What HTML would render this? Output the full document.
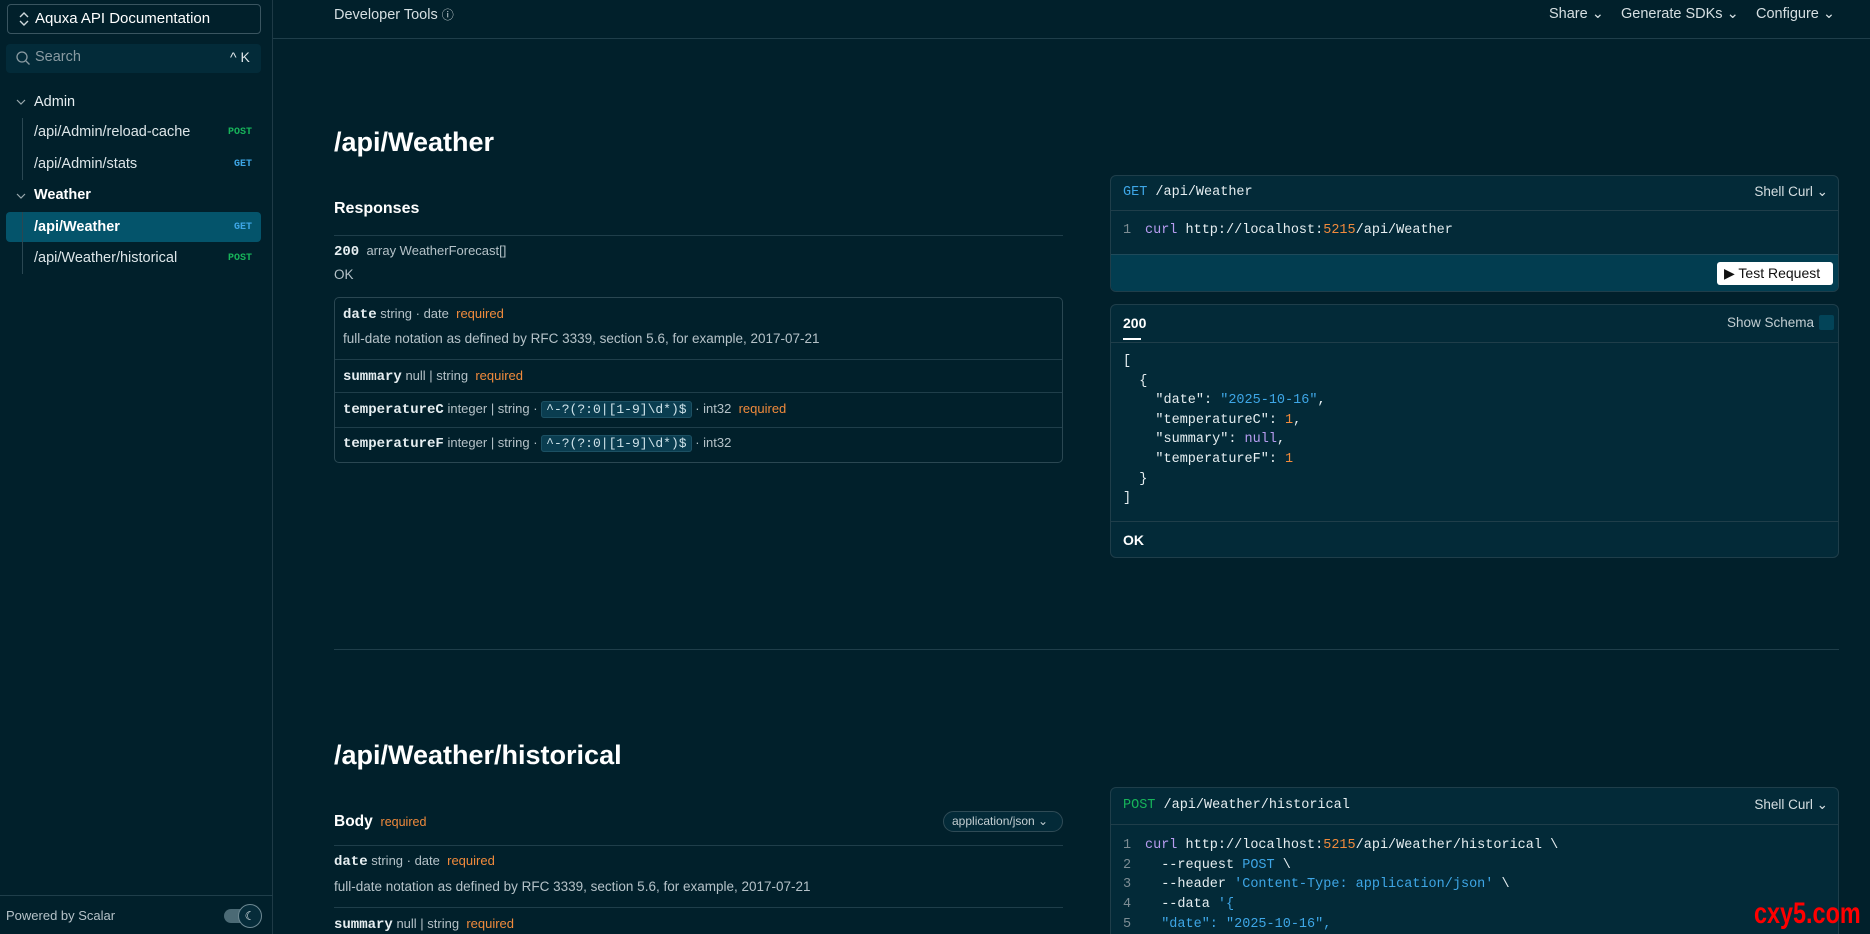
<!DOCTYPE html>
<html style="background:#01202b"><head><meta charset="utf-8"><style>
*{box-sizing:border-box;margin:0;padding:0}
html,body{width:1870px;height:934px;overflow:hidden}
body{background:#01202b;font-family:"Liberation Sans",sans-serif;color:#e6eef1;position:relative}
.a{position:absolute;white-space:nowrap}
.mono{font-family:"Liberation Mono",monospace}
.side{position:absolute;left:0;top:0;width:273px;height:934px;border-right:1px solid #1e3a46}
.g{color:#17b45a;font-size:10px;font-weight:bold;font-family:"Liberation Mono",monospace}
.b{color:#3ea6e6;font-size:10px;font-weight:bold;font-family:"Liberation Mono",monospace}
.muted{color:#b5c2c8}
.req{color:#f08a3c}
.chip{background:#0a3d50;border:1px solid #1c5063;border-radius:3px;padding:0 4px;font-family:"Liberation Mono",monospace;font-size:13px;color:#cfe3ea}
.panel{position:absolute;left:1110px;width:729px;background:#032a38;border:1px solid #1f3e4a;border-radius:6px;overflow:hidden}
.hl{position:absolute;height:1px;background:#1f3e4a}
.code{font-family:"Liberation Mono",monospace;font-size:13.5px}
.ln{color:#7d8d94;display:inline-block;width:22px}
</style></head><body>
<div class="side">
 <div class="a" style="left:7px;top:4px;width:254px;height:30px;border:1px solid #3a5560;border-radius:4px"></div>
 <svg class="a" style="left:18px;top:11px" width="12" height="16" viewBox="0 0 12 16"><path d="M2 6l4-4 4 4M2 10l4 4 4-4" fill="none" stroke="#cfd8dc" stroke-width="1.4"/></svg>
 <div class="a" style="left:35px;top:10px;font-size:15px;color:#fff">Aquxa API Documentation</div>
 <div class="a" style="left:6px;top:44px;width:255px;height:29px;background:#032b39;border-radius:4px"></div>
 <svg class="a" style="left:15px;top:50px" width="16" height="16" viewBox="0 0 16 16"><circle cx="7" cy="7" r="5" fill="none" stroke="#8a9ba2" stroke-width="1.3"/><path d="M11 11l3.5 3.5" stroke="#8a9ba2" stroke-width="1.3"/></svg>
 <div class="a" style="left:35px;top:49px;font-size:14.5px;color:#8a9ba2">Search</div>
 <div class="a" style="left:230px;top:49px;font-size:14px;color:#dfe6e9">^ K</div>
 <svg class="a" style="left:16px;top:98px" width="10" height="8" viewBox="0 0 10 8"><path d="M1 2l4 4 4-4" fill="none" stroke="#9aa9ae" stroke-width="1.2"/></svg>
 <div class="a" style="left:34px;top:94px;font-size:14.5px;color:#e6eef1">Admin</div>
 <div class="a" style="left:22px;top:118px;width:1px;height:62px;background:#2a4752"></div>
 <div class="a" style="left:34px;top:124px;font-size:14.5px;color:#dde6e9">/api/Admin/reload-cache</div>
 <div class="a g" style="left:228px;top:127px">POST</div>
 <div class="a" style="left:34px;top:156px;font-size:14.5px;color:#dde6e9">/api/Admin/stats</div>
 <div class="a b" style="left:234px;top:159px">GET</div>
 <svg class="a" style="left:16px;top:192px" width="10" height="8" viewBox="0 0 10 8"><path d="M1 2l4 4 4-4" fill="none" stroke="#9aa9ae" stroke-width="1.2"/></svg>
 <div class="a" style="left:34px;top:187px;font-size:14.5px;font-weight:bold;color:#fff">Weather</div>
 <div class="a" style="left:6px;top:212px;width:255px;height:30px;background:#04546b;border-radius:4px"></div>
 <div class="a" style="left:22px;top:212px;width:1px;height:62px;background:#2a4752"></div>
 <div class="a" style="left:34px;top:219px;font-size:14.5px;font-weight:bold;color:#fff">/api/Weather</div>
 <div class="a b" style="left:234px;top:222px">GET</div>
 <div class="a" style="left:34px;top:250px;font-size:14.5px;color:#dde6e9">/api/Weather/historical</div>
 <div class="a g" style="left:228px;top:253px">POST</div>
 <div class="a" style="left:0;top:895px;width:273px;height:1px;background:#1f3e4a"></div>
 <div class="a" style="left:6px;top:908px;font-size:13px;color:#b5c2c8">Powered by Scalar</div>
 <div class="a" style="left:224px;top:909px;width:30px;height:14px;background:#4b6a75;border-radius:7px"></div>
 <div class="a" style="left:238px;top:904px;width:24px;height:24px;background:#062c3a;border:1px solid #6f8a94;border-radius:12px;font-size:12px;text-align:center;line-height:22px;color:#dfe6e9">☾</div>
</div>
<div class="a" style="left:273px;top:38px;width:1597px;height:1px;background:#1f3e4a"></div>
<div class="a" style="left:334px;top:6px;font-size:14.5px;color:#d6dfe2">Developer Tools <span style="font-size:12px">ⓘ</span></div>
<div class="a" style="left:1549px;top:6px;font-size:14.5px;color:#d6dfe2">Share ⌄</div>
<div class="a" style="left:1621px;top:6px;font-size:14.5px;color:#d6dfe2">Generate SDKs ⌄</div>
<div class="a" style="left:1756px;top:6px;font-size:14.5px;color:#d6dfe2">Configure ⌄</div>

<div class="a" style="left:334px;top:127px;font-size:27px;font-weight:bold;color:#fff">/api/Weather</div>
<div class="a" style="left:334px;top:200px;font-size:16px;font-weight:bold;color:#fff">Responses</div>
<div class="hl" style="left:334px;top:235px;width:729px"></div>
<div class="a" style="left:334px;top:243px;font-size:13px"><b class="mono" style="font-size:14px">200</b> <span class="muted">&nbsp;array WeatherForecast[]</span></div>
<div class="a muted" style="left:334px;top:267px;font-size:13.5px">OK</div>
<div class="a" style="left:334px;top:297px;width:729px;height:166px;border:1px solid #2a4752;border-radius:5px"></div>
<div class="hl" style="left:335px;top:359px;width:727px"></div>
<div class="hl" style="left:335px;top:392px;width:727px"></div>
<div class="hl" style="left:335px;top:427px;width:727px"></div>
<div class="a" style="left:343px;top:306px;font-size:13px"><b class="mono" style="font-size:14px">date</b> <span class="muted">string · date</span> &nbsp;<span class="req">required</span></div>
<div class="a muted" style="left:343px;top:331px;font-size:13.5px">full-date notation as defined by RFC 3339, section 5.6, for example, 2017-07-21</div>
<div class="a" style="left:343px;top:368px;font-size:13px"><b class="mono" style="font-size:14px">summary</b> <span class="muted">null | string</span> &nbsp;<span class="req">required</span></div>
<div class="a" style="left:343px;top:401px;font-size:13px"><b class="mono" style="font-size:14px">temperatureC</b> <span class="muted">integer | string · </span><span class="chip">^-?(?:0|[1-9]\d*)$</span> <span class="muted">· int32</span> &nbsp;<span class="req">required</span></div>
<div class="a" style="left:343px;top:435px;font-size:13px"><b class="mono" style="font-size:14px">temperatureF</b> <span class="muted">integer | string · </span><span class="chip">^-?(?:0|[1-9]\d*)$</span> <span class="muted">· int32</span></div>

<div class="panel" style="top:175px;height:117px">
 <div class="a code" style="left:12px;top:9px"><span style="color:#3ea6e6">GET</span> /api/Weather</div>
 <div class="a" style="right:10px;top:8px;font-size:13.5px;color:#d6dfe2">Shell Curl ⌄</div>
 <div class="hl" style="left:0;top:34px;width:729px"></div>
 <div class="a code" style="left:12px;top:47px"><span class="ln">1</span><span style="color:#b79cf0">curl</span> http://localhost:<span style="color:#f08a3c">5215</span>/api/Weather</div>
 <div class="a" style="left:0;top:78px;width:729px;height:39px;background:#023d50;border-top:1px solid #1f4a5a"></div>
 <div class="a" style="left:606px;top:86px;width:116px;height:23px;background:#fff;border-radius:3px;color:#111;font-size:14px;line-height:23px;padding-left:7px">▶ Test Request</div>
</div>

<div class="panel" style="top:304px;height:254px">
 <div class="a" style="left:12px;top:10px;font-size:14px;font-weight:bold;color:#fff">200</div>
 <div class="a" style="left:12px;top:33px;width:18px;height:2px;background:#fff"></div>
 <div class="a" style="right:24px;top:10px;font-size:13.5px;color:#c3ced2">Show Schema</div>
 <div class="a" style="right:4px;top:10px;width:15px;height:15px;background:#034458;border-radius:2px"></div>
 <div class="hl" style="left:0;top:37px;width:729px"></div>
 <div class="a code" style="left:12px;top:47px;line-height:19.6px;white-space:pre">[
  {
    "date": <span style="color:#3ea6e6">"2025-10-16"</span>,
    "temperatureC": <span style="color:#f08a3c">1</span>,
    "summary": <span style="color:#b79cf0">null</span>,
    "temperatureF": <span style="color:#f08a3c">1</span>
  }
]</div>
 <div class="hl" style="left:0;top:216px;width:729px"></div>
 <div class="a" style="left:12px;top:227px;font-size:14px;font-weight:bold;color:#fff">OK</div>
</div>

<div class="hl" style="left:334px;top:649px;width:1505px"></div>
<div class="a" style="left:334px;top:740px;font-size:27px;font-weight:bold;color:#fff">/api/Weather/historical</div>
<div class="a" style="left:334px;top:813px;font-size:15.5px;font-weight:bold;color:#fff">Body <span class="req" style="font-size:12.5px;font-weight:normal">&nbsp;required</span></div>
<div class="a" style="left:943px;top:811px;width:120px;height:21px;border:1px solid #2f4b56;border-radius:11px;background:#032a38;font-size:12px;color:#c3ced2;line-height:19px;padding-left:8px">application/json ⌄</div>
<div class="hl" style="left:334px;top:845px;width:729px"></div>
<div class="a" style="left:334px;top:853px;font-size:13px"><b class="mono" style="font-size:14px">date</b> <span class="muted">string · date</span> &nbsp;<span class="req">required</span></div>
<div class="a muted" style="left:334px;top:879px;font-size:13.5px">full-date notation as defined by RFC 3339, section 5.6, for example, 2017-07-21</div>
<div class="hl" style="left:334px;top:907px;width:729px"></div>
<div class="a" style="left:334px;top:916px;font-size:13px"><b class="mono" style="font-size:14px">summary</b> <span class="muted">null | string</span> &nbsp;<span class="req">required</span></div>

<div class="panel" style="top:787px;height:160px">
 <div class="a code" style="left:12px;top:10px"><span style="color:#17b45a">POST</span> /api/Weather/historical</div>
 <div class="a" style="right:10px;top:9px;font-size:13.5px;color:#d6dfe2">Shell Curl ⌄</div>
 <div class="hl" style="left:0;top:36px;width:729px"></div>
 <div class="a code" style="left:12px;top:48px;line-height:19.7px;white-space:pre"><span class="ln">1</span><span style="color:#b79cf0">curl</span> http://localhost:<span style="color:#f08a3c">5215</span>/api/Weather/historical \
<span class="ln">2</span>  --request <span style="color:#3ea6e6">POST</span> \
<span class="ln">3</span>  --header <span style="color:#3ea6e6">'Content-Type: application/json'</span> \
<span class="ln">4</span>  --data <span style="color:#3ea6e6">'{</span>
<span class="ln">5</span><span style="color:#3ea6e6">  "date": "2025-10-16",</span></div>
</div>
<div class="a" style="left:1754px;top:897px;font-size:30px;font-weight:bold;color:#ff0000;transform:scaleX(0.78);transform-origin:left top">cxy5.com</div>
</body></html>
